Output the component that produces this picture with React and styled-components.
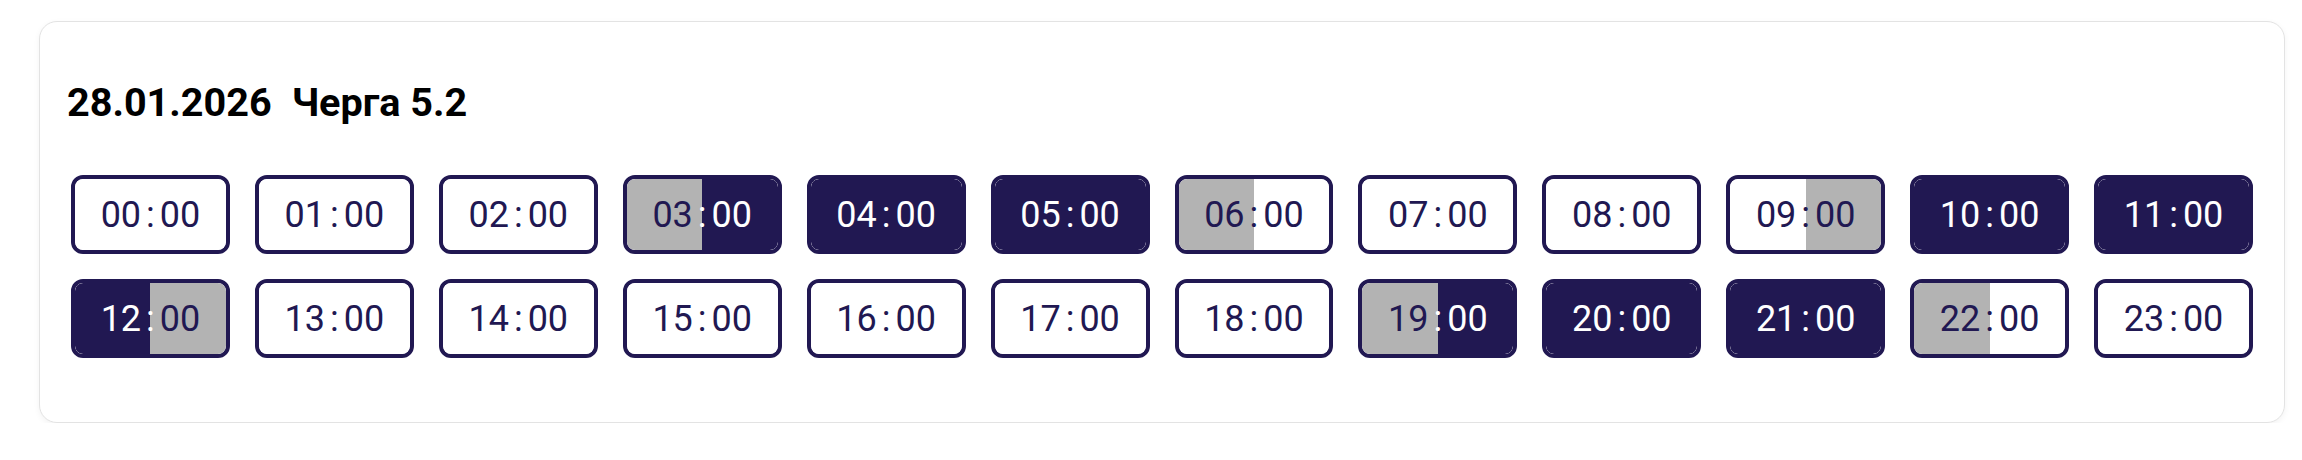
import React from 'react';
import styled, { createGlobalStyle } from 'styled-components';

const GlobalStyle = createGlobalStyle`
body {
  margin: 0;
  background: #ffffff;
  font-family: Roboto, "Liberation Sans", sans-serif;
}
`;

const NAVY = '#211852';
const GRAY = '#b3b3b3';

const Page = styled.div`
padding: 21px 17px 0 39px;
`;

const Card = styled.div`
box-sizing: border-box;
width: 2246px;
height: 402px;
border: 1px solid #e3e3e3;
border-radius: 18px;
box-shadow: 0 2px 6px rgba(0, 0, 0, 0.05);
background: #ffffff;
padding: 57px 31px 0 27px;
`;

const Title = styled.div`
font-family: Roboto, sans-serif;
font-weight: 700;
font-size: 39.6px;
line-height: 47px;
color: #000000;
display: flex;
`;

const DateText = styled.span`
margin-right: 20px;
`;

const Grid = styled.div`
display: grid;
grid-template-columns: repeat(12, 1fr);
gap: 25px;
margin: 49px 0 0 4px;
`;

const Slot = styled.div`
position: relative;
box-sizing: border-box;
height: 79px;
border: 4px solid ${NAVY};
border-radius: 12px;
display: flex;
overflow: hidden;
`;

const fill = (s) => (s === 'on' ? NAVY : s === 'half' ? GRAY : '#ffffff');

const Half = styled.div`
flex: 1;
background: ${(p) => fill(p.$state)};
border-radius: ${(p) => (p.$side === 'left' ? '8px 0 0 8px' : '0 8px 8px 0')};
`;

const Label = styled.div`
position: absolute;
inset: 0;
display: flex;
align-items: center;
justify-content: center;
font-family: Roboto, sans-serif;
font-size: 36px;
font-weight: 400;
`;

const Part = styled.span`
color: ${(p) => (p.$state === 'on' ? '#ffffff' : NAVY)};
`;

const Colon = styled.span`
margin: 0 5px 0 5px;
color: ${(p) => (p.$light ? '#ffffff' : NAVY)};
`;

// [hour, first half, second half]
const slots = [
  ['00', 'off', 'off'], ['01', 'off', 'off'], ['02', 'off', 'off'], ['03', 'half', 'on'],
  ['04', 'on', 'on'], ['05', 'on', 'on'], ['06', 'half', 'off'], ['07', 'off', 'off'],
  ['08', 'off', 'off'], ['09', 'off', 'half'], ['10', 'on', 'on'], ['11', 'on', 'on'],
  ['12', 'on', 'half'], ['13', 'off', 'off'], ['14', 'off', 'off'], ['15', 'off', 'off'],
  ['16', 'off', 'off'], ['17', 'off', 'off'], ['18', 'off', 'off'], ['19', 'half', 'on'],
  ['20', 'on', 'on'], ['21', 'on', 'on'], ['22', 'half', 'off'], ['23', 'off', 'off'],
];

export default function App() {
  return (
    <Page>
      <GlobalStyle />
      <Card>
        <Title>
          <DateText>28.01.2026</DateText>
          <span>Черга 5.2</span>
        </Title>
        <Grid>
          {slots.map(([h, a, b]) => (
            <Slot key={h}>
              <Half $side="left" $state={a} />
              <Half $side="right" $state={b} />
              <Label>
                <Part $state={a}>{h}</Part>
                <Colon $light={a === 'on' || b === 'on'}>:</Colon>
                <Part $state={b}>00</Part>
              </Label>
            </Slot>
          ))}
        </Grid>
      </Card>
    </Page>
  );
}
